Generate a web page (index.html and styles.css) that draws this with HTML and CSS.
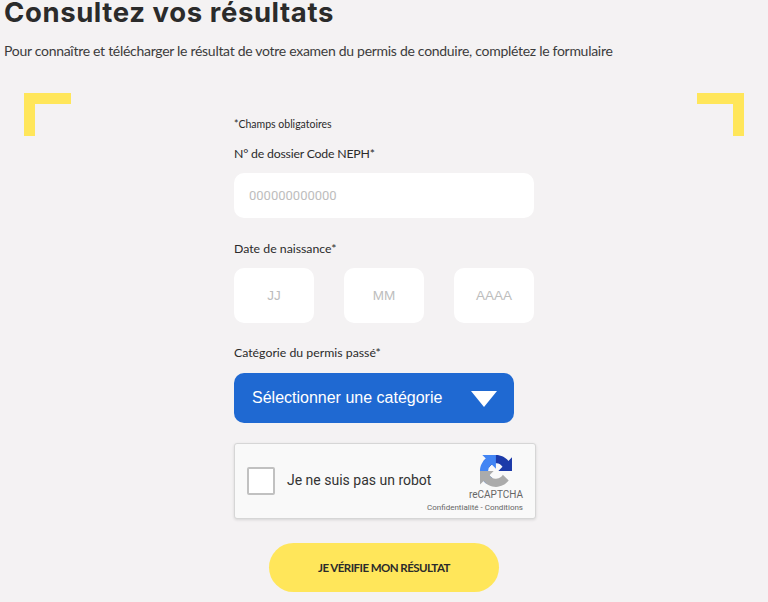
FILE: index.html
```html
<!DOCTYPE html>
<html lang="fr">
<head>
    <meta charset="UTF-8">
    <meta name="viewport" content="width=device-width, initial-scale=1.0">
    <title>Consultez vos résultats</title>
    <link rel="stylesheet" href="styles.css">
</head>
<body>
    <h1 class="title">Consultez vos résultats</h1>
    <p class="intro">Pour connaître et télécharger le résultat de votre examen du permis de conduire, complétez le formulaire</p>

    <div class="zone">
        <span class="corner corner-left"></span>

        <form class="form">
            <p class="required">*Champs obligatoires</p>

            <label class="label label-neph" for="neph">N° de dossier Code NEPH*</label>
            <input class="field field-neph" type="text" id="neph" placeholder="000000000000">

            <label class="label label-date" for="day">Date de naissance*</label>
            <div class="date-row">
                <input class="field field-date" type="text" id="day" placeholder="JJ">
                <input class="field field-date" type="text" id="month" placeholder="MM">
                <input class="field field-date" type="text" id="year" placeholder="AAAA">
            </div>

            <label class="label label-cat">Catégorie du permis passé*</label>
            <button class="select" type="button">
                <span>Sélectionner une catégorie</span>
                <span class="arrow"></span>
            </button>

            <div class="captcha">
                <span class="captcha-box"></span>
                <span class="captcha-text">Je ne suis pas un robot</span>
                <div class="captcha-brand">
                    <svg class="captcha-logo" viewBox="0 0 64 64" width="32" height="32">
                        <path fill="#1c3aa9" d="M64 31.955l-.033-1.37V4.687l-7.16 7.16C50.948 4.674 42.033.093 32.05.093c-10.4 0-19.622 4.96-25.458 12.64l11.736 11.86a15.55 15.55 0 0 1 4.75-5.33c2.05-1.6 4.952-2.906 8.972-2.906.486 0 .86.057 1.136.163 4.982.393 9.3 3.143 11.83 7.13l-8.3 8.3c10.517-.04 22.397-.064 28.285.002"/>
                        <path fill="#4285f4" d="M31.862.001l-1.37.033H4.594l7.16 7.16C4.58 13.053 0 21.968 0 31.95c0 10.4 4.96 19.622 12.64 25.458L24.5 45.672a15.55 15.55 0 0 1-5.33-4.75c-1.6-2.05-2.906-4.952-2.906-8.972 0-.486.057-.86.163-1.136.393-4.982 3.143-9.3 7.13-11.83l8.3 8.3c-.04-10.517-.064-22.397.002-28.285"/>
                        <path fill="#ababab" d="M.001 31.947l.033 1.37v25.898l7.16-7.16c5.86 7.173 14.774 11.754 24.76 11.754 10.4 0 19.622-4.96 25.458-12.64l-11.736-11.86a15.55 15.55 0 0 1-4.75 5.33c-2.05 1.6-4.952 2.906-8.972 2.906-.486 0-.86-.057-1.136-.163-4.982-.393-9.3-3.143-11.83-7.13l8.3-8.3C17.77 31.99 5.89 32.013.002 31.947"/>
                    </svg>
                    <span class="captcha-name">reCAPTCHA</span>
                    <span class="captcha-links">Confidentialité - Conditions</span>
                </div>
            </div>

            <button class="submit" type="submit">JE VÉRIFIE MON RÉSULTAT</button>
        </form>

        <span class="corner corner-right"></span>
    </div>
</body>
</html>
```

FILE: styles.css
```css
* {
    box-sizing: border-box;
}

html, body {
    height: 602px;
    overflow: hidden;
}

body {
    margin: 0;
    padding: 0 0 0 4px;
    background-color: #f4f2f3;
    color: #2b2b2b;
    font-family: "Lato", sans-serif;
}

.title {
    margin: 0;
    font-family: "Inter", sans-serif;
    font-size: 27.5px;
    font-weight: 700;
    line-height: 25px;
    letter-spacing: 0.6px;
}

.intro {
    margin: 16px 0 0;
    font-size: 14px;
    line-height: 20px;
    letter-spacing: -0.29px;
    color: #3c3c3c;
}

.zone {
    display: flex;
    justify-content: space-between;
    margin: 32px 0 0 -4px;
    padding: 0 24px;
}

.corner {
    flex: none;
    width: 47px;
    height: 43px;
    border-top: 11px solid #ffe65a;
}

.corner-left {
    border-left: 11px solid #ffe65a;
}

.corner-right {
    border-right: 11px solid #ffe65a;
}

.form {
    width: 302px;
    margin-left: 2px;
    display: flex;
    flex-direction: column;
    align-items: flex-start;
}

.required {
    margin: 24px 0 0;
    font-size: 10.5px;
    line-height: 14px;
}

.label {
    display: block;
    font-size: 12.3px;
    line-height: 16px;
    margin-top: 15px;
}

.label-neph {
    letter-spacing: -0.2px;
}

.label-date {
    margin-top: 23px;
}

.label-cat {
    margin-top: 22px;
}

.field {
    border: none;
    border-radius: 10px;
    background: #fff;
    outline: none;
    font-family: "Liberation Sans", sans-serif;
}

.field::placeholder {
    color: #bdbdbd;
    opacity: 1;
}

.field-neph {
    width: 300px;
    height: 45px;
    margin-top: 11px;
    padding: 0 15px;
    font-family: "Roboto", sans-serif;
    font-size: 13px;
}

.date-row {
    display: flex;
    gap: 30px;
    margin-top: 11px;
}

.field-date {
    width: 80px;
    height: 55px;
    text-align: center;
    font-size: 13.5px;
}

.select {
    display: flex;
    justify-content: space-between;
    align-items: center;
    width: 280px;
    height: 50px;
    margin-top: 12px;
    padding: 0 17px 0 18px;
    border: none;
    border-radius: 10px;
    background-color: #1f69d2;
    color: #fff;
    font-family: "Liberation Sans", sans-serif;
    font-size: 16px;
}

.arrow {
    width: 0;
    height: 0;
    border-left: 13px solid transparent;
    border-right: 13px solid transparent;
    border-top: 16px solid #fff;
    margin-top: 1px;
}

.captcha {
    display: flex;
    align-items: center;
    width: 302px;
    height: 76px;
    margin-top: 20px;
    padding: 0 12px;
    border: 1px solid #d6d6d6;
    border-radius: 3px;
    background: #f9f9f9;
    box-shadow: 0 1px 3px rgba(0, 0, 0, 0.12);
    font-family: "Roboto", sans-serif;
}

.captcha-box {
    flex: none;
    width: 28px;
    height: 28px;
    border: 2px solid #c1c1c1;
    border-radius: 2px;
    background: #fff;
}

.captcha-text {
    margin: -2px 0 0 12px;
    font-size: 14px;
    color: #333;
    white-space: nowrap;
}

.captcha-brand {
    flex: none;
    width: 60px;
    display: flex;
    flex-direction: column;
    align-items: flex-end;
    margin: 6px 0 0 auto;
    color: #666;
    white-space: nowrap;
}

.captcha-logo {
    flex: none;
    margin-right: 11px;
}

.captcha-name {
    font-size: 10px;
    line-height: 14px;
    margin-top: 1px;
}

.captcha-links {
    font-size: 8px;
    line-height: 12px;
}

.submit {
    align-self: center;
    width: 230px;
    height: 49px;
    margin: 24px 0 0 -2px;
    border: none;
    border-radius: 25px;
    background-color: #ffe65a;
    color: #2b2b2b;
    font-family: "Lato", sans-serif;
    font-size: 11.5px;
    font-weight: 700;
    letter-spacing: -0.55px;
}
```
